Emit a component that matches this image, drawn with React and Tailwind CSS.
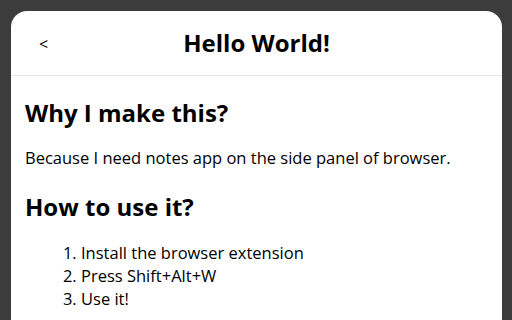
export default function App() {
    return (
        <div className="min-h-screen bg-[#3c3c3c] pl-[11px] pr-[10px] pt-[11px] font-['Open_Sans',sans-serif] text-black">
            <div className="h-[309px] overflow-hidden rounded-t-[16px] bg-white">
                <header className="relative flex h-[65px] items-center justify-center border-b border-[#e3e3e3]">
                    <button className="absolute left-[28px] top-[25px] text-[16px] leading-none">&lt;</button>
                    <h1 className="text-[24px] font-bold">Hello World!</h1>
                </header>
                <main className="px-[14px] pt-[19px]">
                    <h2 className="text-[24px] font-bold leading-[36px]">Why I make this?</h2>
                    <p className="mt-[15px] text-[16.5px] leading-[24px]">
                        Because I need notes app on the side panel of browser.
                    </p>
                    <h2 className="mt-[19px] text-[24px] font-bold leading-[36px]">How to use it?</h2>
                    <ol className="mt-[16px] list-decimal pl-[56px] text-[16.5px] leading-[23px]">
                        <li>Install the browser extension</li>
                        <li>Press Shift+Alt+W</li>
                        <li>Use it!</li>
                    </ol>
                </main>
            </div>
        </div>
    );
}
